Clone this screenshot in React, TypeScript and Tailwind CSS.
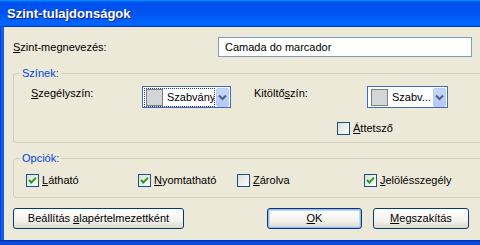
import React from "react";

const font = { fontFamily: '"Liberation Sans", Arial, sans-serif' };

function U({ children }: { children: React.ReactNode }) {
  return <span className="underline underline-offset-[1px]">{children}</span>;
}

function Check({ checked }: { checked: boolean }) {
  return (
    <div className="w-[13px] h-[13px] border border-[#1C5180] bg-[linear-gradient(135deg,#DCDCD7,#FFFFFF)] flex items-center justify-center shrink-0">
      {checked && (
        <svg width="11" height="11" viewBox="0 0 11 11">
          <path d="M2 5 L4.3 7.5 L9 2.6" stroke="#21A121" strokeWidth="2" fill="none" />
        </svg>
      )}
    </div>
  );
}

function Combo({ width, text, focused }: { width: string; text: string; focused?: boolean }) {
  return (
    <div className={`${width} h-[22px] border border-[#3D6AC3] bg-white flex items-center p-[1px]`}>
      <div
        className={`flex items-center h-[19px] flex-1 overflow-hidden pl-[1px] ${
          focused ? "border border-dotted border-[#3A2C9E]" : "border border-transparent"
        }`}
      >
        <div className="w-[17px] h-[17px] border border-[#7F7F7F] bg-[#D4D5D8] shrink-0" />
        <span className="ml-[4px] text-[11px] text-black whitespace-nowrap leading-none">{text}</span>
      </div>
      <div className="w-[13px] h-[19px] ml-[1px] rounded-[2px] bg-[linear-gradient(180deg,#C6D6FC,#B4C8F8)] border border-[#B9CBF5] flex items-center justify-center shrink-0">
        <svg width="9" height="7" viewBox="0 0 9 7">
          <path d="M1 1.5 L4.5 5 L8 1.5" stroke="#4D6185" strokeWidth="2" fill="none" />
        </svg>
      </div>
    </div>
  );
}

function Button({ width, children, def }: { width: string; children: React.ReactNode; def?: boolean }) {
  return (
    <div
      className={`${width} h-[21px] border border-[#003C74] rounded-[3px] bg-[linear-gradient(180deg,#FFFFFF,#F4F3EE_60%,#DCD8CC)] flex items-center justify-center text-[11px] text-black ${
        def ? "shadow-[inset_0_0_0_1px_#9DB7F0,inset_0_0_0_2px_#C6D8FA]" : ""
      }`}
    >
      {children}
    </div>
  );
}

export default function App() {
  return (
    <div className="w-[480px] h-[245px] overflow-hidden flex flex-col bg-[#0842D8]" style={font}>
      <div className="h-[27px] shrink-0 bg-[linear-gradient(180deg,#0997ff,#0053ee_8%,#0050ee_40%,#0066ff_88%,#0066ff_93%,#005bff_95%,#003dd7_96%,#003dd7)] flex items-center pl-[7px]">
        <span className="text-white font-bold text-[13px] leading-none [text-shadow:1px_1px_0_#0A1883]">
          Szint-tulajdonságok
        </span>
      </div>
      <div className="flex h-[213px] shrink-0">
        <div className="w-[4px] shrink-0 bg-[linear-gradient(90deg,#0831D9,#166AEE_50%,#0855DD)]" />
        <div className="flex-1 bg-[#ECE9D8] flex flex-col text-[11px] text-black">
          <div className="flex items-center pt-[10px] pl-[9px]">
            <span className="w-[205px]">
              <U>S</U>zint-megnevezés:
            </span>
            <div className="w-[254px] h-[20px] border border-[#7F9DB9] bg-white flex items-center pl-[6px]">
              Camada do marcador
            </div>
          </div>

          <div className="relative ml-[9px] mt-[16px] w-[480px] h-[70px] border border-[#D0D0BF] rounded-[3px] pl-[17px] pt-[12px]">
            <span className="absolute left-[6px] top-[-8px] px-[2px] bg-[#ECE9D8] text-[#0046D5] leading-[14px]">
              Színek:
            </span>
            <div className="flex items-start">
              <span className="w-[111px] mt-[1px] leading-[13px]">
                <U>S</U>zegélyszín:
              </span>
              <Combo width="w-[89px]" text="Szabvány" focused />
              <span className="w-[23px]" />
              <span className="w-[113px] mt-[1px] leading-[13px]">
                Kitöltő<U>s</U>zín:
              </span>
              <Combo width="w-[81px]" text="Szabv..." />
            </div>
            <div className="flex items-center ml-[306px] mt-[12px]">
              <Check checked={false} />
              <span className="ml-[3px]">
                <U>Á</U>ttetsző
              </span>
            </div>
          </div>

          <div className="relative ml-[9px] mt-[15px] w-[480px] h-[40px] border border-[#D0D0BF] rounded-[3px] pl-[12px] pt-[13px]">
            <span className="absolute left-[6px] top-[-8px] px-[2px] bg-[#ECE9D8] text-[#0046D5] leading-[14px]">
              Opciók:
            </span>
            <div className="flex items-center">
              <div className="w-[112px] flex items-center">
                <Check checked />
                <span className="ml-[3px]">
                  <U>L</U>átható
                </span>
              </div>
              <div className="w-[99px] flex items-center">
                <Check checked />
                <span className="ml-[3px]">
                  <U>N</U>yomtatható
                </span>
              </div>
              <div className="w-[127px] flex items-center">
                <Check checked={false} />
                <span className="ml-[3px]">
                  <U>Z</U>árolva
                </span>
              </div>
              <div className="flex items-center">
                <Check checked />
                <span className="ml-[3px]">
                  <U>J</U>elölésszegély
                </span>
              </div>
            </div>
          </div>

          <div className="flex items-center pl-[9px] mt-[10px]">
            <Button width="w-[171px]">
              Beállítás&nbsp;<U>a</U>lapértelmezettként
            </Button>
            <div className="w-[83px]" />
            <Button width="w-[95px]" def>
              <U>O</U>K
            </Button>
            <div className="w-[11px]" />
            <Button width="w-[96px]">
              <U>M</U>egszakítás
            </Button>
          </div>
        </div>
      </div>
      <div className="h-[5px] shrink-0 bg-[linear-gradient(180deg,#001EA0,#0841D9_30%,#0855DD_70%,#0A3FC8)]" />
    </div>
  );
}
